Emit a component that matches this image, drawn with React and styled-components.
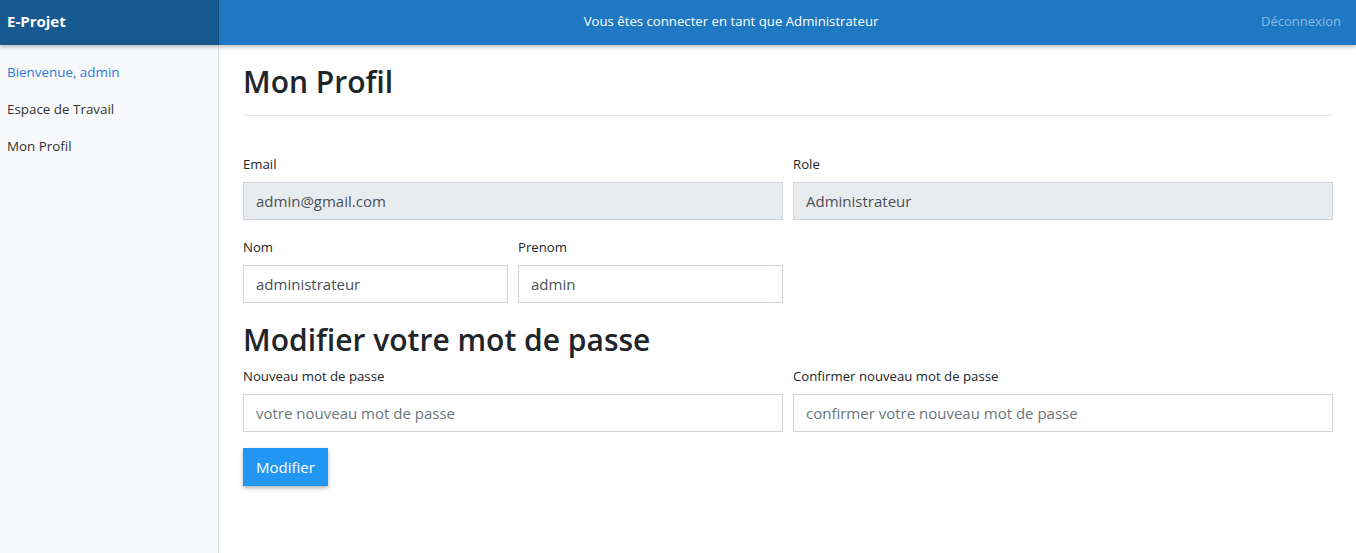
import React from "react";
import styled, { createGlobalStyle } from "styled-components";

const GlobalStyle = createGlobalStyle`
  * { box-sizing: border-box; }
  body {
    margin: 0;
    font-family: "Open Sans", "Noto Sans", sans-serif;
    color: #212529;
    background: #fff;
  }
`;

const Page = styled.div`
  display: flex;
  flex-direction: column;
  height: 553px;
  overflow: hidden;
`;

const Navbar = styled.header`
  display: flex;
  align-items: center;
  height: 45px;
  background: #1e78c2;
  box-shadow: 0 2px 4px rgba(0, 0, 0, 0.25);
  position: relative;
  z-index: 2;
  flex-shrink: 0;
`;

const Brand = styled.div`
  width: 219px;
  height: 100%;
  display: flex;
  align-items: center;
  padding-left: 7px;
  padding-bottom: 3px;
  background: #185a8f;
  border-right: 1px solid #124a78;
  color: #fff;
  font-weight: 700;
  font-size: 15px;
`;

const NavText = styled.div`
  flex: 1;
  text-align: center;
  color: #fff;
  font-size: 13.2px;
  padding-bottom: 3px;
  padding-right: 18px;
`;

const Logout = styled.a`
  color: #8ab8e6;
  font-size: 13px;
  padding-right: 15px;
  padding-bottom: 3px;
  text-decoration: none;
`;

const Body = styled.div`
  display: flex;
  flex: 1;
`;

const Sidebar = styled.nav`
  width: 219px;
  background: #f8f9fa;
  border-right: 1px solid #dee2e6;
  display: flex;
  flex-direction: column;
  padding-top: 8px;
  flex-shrink: 0;
`;

const SideLink = styled.a`
  font-size: 13.4px;
  padding: 0 7px;
  height: 37px;
  display: flex;
  align-items: center;
  color: ${({ $active }) => ($active ? "#2a7ae2" : "#333")};
  text-decoration: none;
`;

const Main = styled.main`
  flex: 1;
  padding: 0 23px 0 24px;
`;

const Title = styled.h1`
  margin: 0;
  padding-top: 19px;
  padding-bottom: 15px;
  font-size: 30px;
  font-weight: 600;
  line-height: 36px;
  border-bottom: 1px solid #dee2e6;
`;

const Form = styled.form`
  display: flex;
  flex-direction: column;
  padding-top: 39px;
`;

const Row = styled.div`
  display: grid;
  grid-template-columns: ${({ $cols }) => $cols};
  column-gap: 10px;
  margin-bottom: ${({ $mb }) => $mb || 0}px;
`;

const Pair = styled.div`
  display: grid;
  grid-template-columns: 1fr 1fr;
  column-gap: 10px;
`;

const Field = styled.div`
  display: flex;
  flex-direction: column;
`;

const Label = styled.label`
  font-size: 13.2px;
  line-height: 18px;
  margin-bottom: 9px;
`;

const Input = styled.input`
  height: 38px;
  padding: 0 12px;
  font-family: inherit;
  font-size: 15px;
  color: #495057;
  background: ${({ disabled }) => (disabled ? "#e9ecef" : "#fff")};
  border: 1px solid #ced4da;
  border-radius: 0;
  outline: none;
  &::placeholder { color: #6c757d; }
`;

const SubTitle = styled.h2`
  margin: 19px 0 9px;
  font-size: 30px;
  font-weight: 600;
  line-height: 36px;
`;

const Button = styled.button`
  align-self: flex-start;
  margin-top: 16px;
  height: 38px;
  padding: 0 13px;
  font-family: inherit;
  font-size: 15px;
  color: #fff;
  background: #2196f3;
  border: none;
  border-radius: 0;
  box-shadow: 0 2px 4px rgba(0, 0, 0, 0.3);
`;

export default function App() {
  return (
    <Page>
      <GlobalStyle />
      <Navbar>
        <Brand>E-Projet</Brand>
        <NavText>Vous êtes connecter en tant que Administrateur</NavText>
        <Logout href="#">Déconnexion</Logout>
      </Navbar>
      <Body>
        <Sidebar>
          <SideLink $active href="#">Bienvenue, admin</SideLink>
          <SideLink href="#">Espace de Travail</SideLink>
          <SideLink href="#">Mon Profil</SideLink>
        </Sidebar>
        <Main>
          <Title>Mon Profil</Title>
          <Form onSubmit={(e) => e.preventDefault()}>
            <Row $cols="1fr 1fr" $mb={18}>
              <Field>
                <Label>Email</Label>
                <Input disabled defaultValue="admin@gmail.com" />
              </Field>
              <Field>
                <Label>Role</Label>
                <Input disabled defaultValue="Administrateur" />
              </Field>
            </Row>
            <Row $cols="1fr 1fr">
              <Pair>
                <Field>
                  <Label>Nom</Label>
                  <Input defaultValue="administrateur" />
                </Field>
                <Field>
                  <Label>Prenom</Label>
                  <Input defaultValue="admin" />
                </Field>
              </Pair>
            </Row>
            <SubTitle>Modifier votre mot de passe</SubTitle>
            <Row $cols="1fr 1fr">
              <Field>
                <Label>Nouveau mot de passe</Label>
                <Input type="password" placeholder="votre nouveau mot de passe" />
              </Field>
              <Field>
                <Label>Confirmer nouveau mot de passe</Label>
                <Input type="password" placeholder="confirmer votre nouveau mot de passe" />
              </Field>
            </Row>
            <Button type="submit">Modifier</Button>
          </Form>
        </Main>
      </Body>
    </Page>
  );
}
